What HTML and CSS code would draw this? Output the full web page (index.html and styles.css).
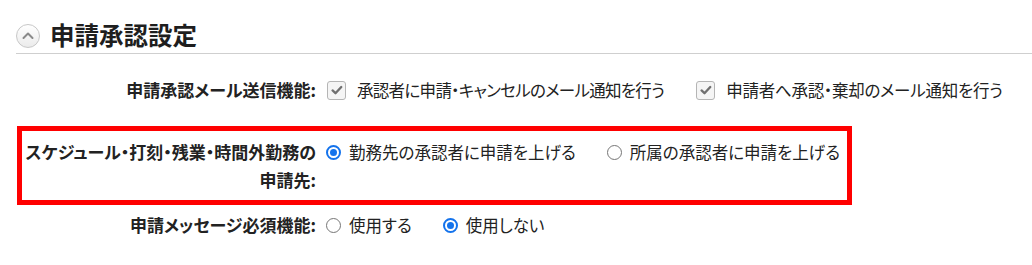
FILE: index.html
```html
<!DOCTYPE html>
<html lang="ja">
<head>
<meta charset="utf-8">
<title>申請承認設定</title>
<link rel="stylesheet" href="styles.css">
</head>
<body>
<div class="page">
  <div class="header">
    <span class="toggle">
      <svg viewBox="0 0 24 24" width="24" height="24"><path d="M7.5 14 L12 9.5 L16.5 14" fill="none" stroke="#8a8a8a" stroke-width="2" stroke-linecap="round" stroke-linejoin="round"/></svg>
    </span>
    <h1 class="title">申請承認設定</h1>
  </div>
  <div class="form">
    <div class="row row-mail">
      <div class="label">申請承認メール送信機能:</div>
      <div class="values">
        <label class="opt"><span class="check"><svg viewBox="0 0 18 18" width="16" height="16"><path d="M4 9.5 L7.3 12.6 L13.8 5.6" fill="none" stroke="#707070" stroke-width="2.6" stroke-linecap="round" stroke-linejoin="round"/></svg></span><span class="text tight">承認者に申請・キャンセルのメール通知を行う</span></label>
        <label class="opt"><span class="check"><svg viewBox="0 0 18 18" width="16" height="16"><path d="M4 9.5 L7.3 12.6 L13.8 5.6" fill="none" stroke="#707070" stroke-width="2.6" stroke-linecap="round" stroke-linejoin="round"/></svg></span><span class="text loose">申請者へ承認・棄却のメール通知を行う</span></label>
      </div>
    </div>
    <div class="row hl">
      <div class="label">スケジュール・打刻・残業・時間外勤務の<br>申請先:</div>
      <div class="values">
        <label class="opt"><span class="radio on"></span><span class="text">勤務先の承認者に申請を上げる</span></label>
        <label class="opt"><span class="radio"></span><span class="text">所属の承認者に申請を上げる</span></label>
      </div>
    </div>
    <div class="row row-msg">
      <div class="label">申請メッセージ必須機能:</div>
      <div class="values">
        <label class="opt"><span class="radio"></span><span class="text">使用する</span></label>
        <label class="opt"><span class="radio on"></span><span class="text">使用しない</span></label>
      </div>
    </div>
  </div>
</div>
</body>
</html>
```

FILE: styles.css
```css
html, body {
  margin: 0;
  padding: 0;
  background: #ffffff;
}
body {
  font-family: "Noto Sans CJK JP", "Noto Sans", sans-serif;
  color: #222222;
  font-feature-settings: "palt";
}
.page {
  padding-left: 16px;
}
.header {
  display: flex;
  align-items: center;
  padding-top: 21px;
  padding-bottom: 4px;
  border-bottom: 1px solid #cfcfcf;
}
.toggle {
  width: 24px;
  height: 24px;
  box-sizing: border-box;
  border: 1px solid #c8c8c8;
  border-radius: 50%;
  background: linear-gradient(#ffffff, #ebebeb);
  display: flex;
  align-items: center;
  justify-content: center;
  margin-top: 2px;
  flex-shrink: 0;
}
.toggle svg {
  display: block;
  margin: -1px;
}
.title {
  margin: 0 0 0 10px;
  font-size: 24.5px;
  line-height: 28px;
  font-weight: bold;
  color: #1e1e1e;
}
.form {
  padding-top: 22px;
}
.row {
  display: flex;
  align-items: flex-start;
  margin-left: 1px;
  padding-left: 5px;
  line-height: 28px;
  white-space: nowrap;
}
.row.hl {
  width: fit-content;
  border: 5px solid #ff0000;
  padding: 7px 7px 6px 0;
  margin-top: 22px;
}
.row-msg {
  margin-top: 6px;
}
.label {
  width: 294px;
  flex-shrink: 0;
  text-align: right;
  font-weight: bold;
  font-size: 17px;
  color: #222222;
}
.values {
  display: flex;
  align-items: center;
  margin-left: 10px;
  height: 28px;
  gap: 31px;
}
.opt {
  display: flex;
  align-items: center;
  color: #222222;
  font-size: 16.5px;
  flex-shrink: 0;
}
.text.tight {
  letter-spacing: -0.7px;
}
.text.loose {
  letter-spacing: -0.25px;
}
.check {
  width: 19px;
  height: 19px;
  box-sizing: border-box;
  border: 1px solid #b5b5b5;
  border-radius: 3px;
  background: #f5f5f5;
  display: flex;
  align-items: center;
  justify-content: center;
  margin-right: 11px;
  margin-left: 1px;
  flex-shrink: 0;
}
.check svg {
  display: block;
}
.radio {
  width: 15px;
  height: 15px;
  box-sizing: border-box;
  border: 1.5px solid #767676;
  border-radius: 50%;
  background: #ffffff;
  margin-right: 8px;
  position: relative;
  flex-shrink: 0;
}
.radio.on {
  border: 2px solid #1473ec;
}
.radio.on::after {
  content: "";
  position: absolute;
  left: 2px;
  top: 2px;
  width: 7px;
  height: 7px;
  border-radius: 50%;
  background: #1473ec;
}
```
